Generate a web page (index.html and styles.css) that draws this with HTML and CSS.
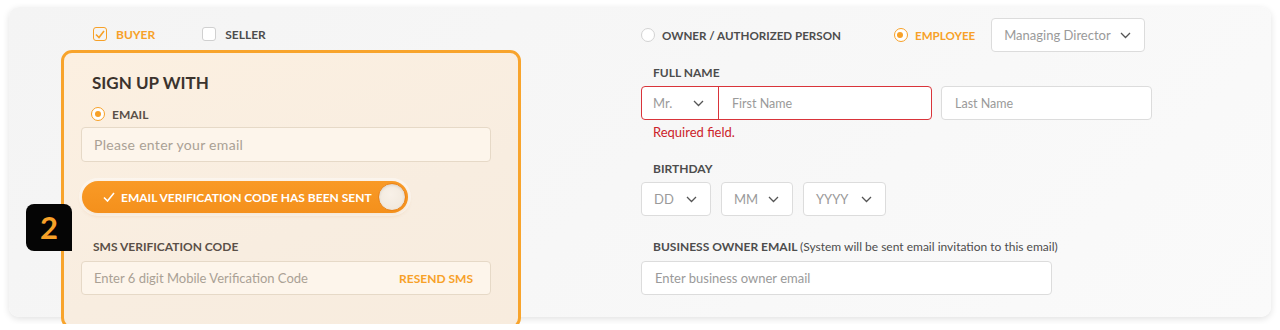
FILE: index.html
```html
<!DOCTYPE html>
<html lang="en">
<head>
<meta charset="UTF-8">
<meta name="viewport" content="width=device-width, initial-scale=1.0">
<title>Sign Up</title>
<link rel="stylesheet" href="styles.css">
</head>
<body>
<div class="card">
  <div class="left-col">
    <div class="roles">
      <label class="check checked">
        <span class="box"><svg width="10" height="9" viewBox="0 0 10 9"><polyline points="1,4.5 4,7.5 9,1" fill="none" stroke="#f7a128" stroke-width="1.6"/></svg></span>
        BUYER
      </label>
      <label class="check">
        <span class="box"></span>
        SELLER
      </label>
    </div>

    <div class="signup-panel">
      <div class="step-badge">2</div>
      <h2>SIGN UP WITH</h2>
      <label class="radio checked panel-radio"><span class="dot"></span>EMAIL</label>
      <div class="panel-input email">
        <span class="placeholder">Please enter your email</span>
      </div>
      <div class="sent-pill">
        <span class="pill-text">
          <svg width="12" height="10" viewBox="0 0 12 10"><polyline points="1,5.5 4.5,9 11,1" fill="none" stroke="#fff" stroke-width="1.6"/></svg>
          EMAIL VERIFICATION CODE HAS BEEN SENT
        </span>
        <span class="knob"></span>
      </div>
      <div class="panel-label">SMS VERIFICATION CODE</div>
      <div class="panel-input sms">
        <span class="placeholder">Enter 6 digit Mobile Verification Code</span>
        <span class="resend">RESEND SMS</span>
      </div>
    </div>
  </div>

  <div class="right-col">
    <div class="type-row">
      <label class="radio"><span class="dot"></span>OWNER / AUTHORIZED PERSON</label>
      <label class="radio checked employee"><span class="dot"></span>EMPLOYEE</label>
      <div class="select position">
        <span>Managing Director</span>
        <svg class="chev" width="11" height="7" viewBox="0 0 11 7"><polyline points="1,1 5.5,5.5 10,1" fill="none" stroke="#555" stroke-width="1.3"/></svg>
      </div>
    </div>

    <div class="field-label">FULL NAME</div>
    <div class="name-row">
      <div class="name-group error">
        <div class="title-select">
          <span>Mr.</span>
          <svg class="chev" width="11" height="7" viewBox="0 0 11 7"><polyline points="1,1 5.5,5.5 10,1" fill="none" stroke="#555" stroke-width="1.3"/></svg>
        </div>
        <div class="first-name">First Name</div>
      </div>
      <div class="input last-name">Last Name</div>
    </div>
    <div class="error-text">Required field.</div>

    <div class="field-label birthday">BIRTHDAY</div>
    <div class="date-row">
      <div class="select dd"><span>DD</span><svg class="chev" width="11" height="7" viewBox="0 0 11 7"><polyline points="1,1 5.5,5.5 10,1" fill="none" stroke="#555" stroke-width="1.3"/></svg></div>
      <div class="select mm"><span>MM</span><svg class="chev" width="11" height="7" viewBox="0 0 11 7"><polyline points="1,1 5.5,5.5 10,1" fill="none" stroke="#555" stroke-width="1.3"/></svg></div>
      <div class="select yyyy"><span>YYYY</span><svg class="chev" width="11" height="7" viewBox="0 0 11 7"><polyline points="1,1 5.5,5.5 10,1" fill="none" stroke="#555" stroke-width="1.3"/></svg></div>
    </div>

    <div class="field-label owner-email">BUSINESS OWNER EMAIL <span class="note">(System will be sent email invitation to this email)</span></div>
    <div class="input owner-input">Enter business owner email</div>
  </div>
</div>
</body>
</html>
```

FILE: styles.css
```css
body {
  margin: 0;
  padding: 0;
  background-color: #ffffff;
  font-family: Lato, "Noto Sans", sans-serif;
  color: #4a4a4a;
}

.card {
  display: flex;
  width: 1262px;
  height: 310px;
  margin: 7px 9px;
  padding: 11px 0 0 52px;
  box-sizing: border-box;
  background: linear-gradient(135deg, #f4f4f4, #fafafa);
  border-radius: 10px;
  box-shadow: 0 2px 7px rgba(0, 0, 0, 0.12);
}

.left-col {
  width: 460px;
}

.right-col {
  margin-left: 120px;
}

/* checkboxes and radios */
.roles {
  display: flex;
  align-items: center;
  height: 32px;
  padding-left: 32px;
  gap: 47px;
}

.check,
.radio {
  display: flex;
  align-items: center;
  font-size: 12px;
  font-weight: 700;
  color: #4d4d4d;
}

.check .box {
  width: 14px;
  height: 14px;
  margin-right: 9px;
  border: 1px solid #d0d0d0;
  border-radius: 3px;
  background: #fff;
  box-sizing: border-box;
  display: flex;
  align-items: center;
  justify-content: center;
}

.check.checked {
  color: #f7a128;
}

.check.checked .box {
  border: 1.5px solid #f7a128;
  background: transparent;
}

.radio .dot {
  width: 14px;
  height: 14px;
  margin-right: 7px;
  border: 1px solid #d3d3d3;
  border-radius: 50%;
  background: #fff;
  box-sizing: border-box;
  position: relative;
}

.radio.checked .dot {
  border: 1.5px solid #f7a128;
}

.radio.checked .dot::after {
  content: "";
  position: absolute;
  left: 2.5px;
  top: 2.5px;
  width: 6px;
  height: 6px;
  border-radius: 50%;
  background: #f7a128;
}

.radio.employee {
  color: #f7a128;
}

/* highlighted sign up panel */
.signup-panel {
  position: relative;
  height: 279px;
  padding: 19px 17px 0;
  box-sizing: border-box;
  border: 3px solid #f8a42c;
  border-radius: 11px;
  background: linear-gradient(160deg, #fcf0e1, #f8ede0 60%, #f8ecde);
}

.step-badge {
  position: absolute;
  left: -38px;
  top: 151px;
  width: 46px;
  height: 47px;
  background: #050505;
  border-radius: 8px 8px 0 8px;
  color: #f7a128;
  font-size: 31px;
  font-weight: 700;
  line-height: 47px;
  text-align: center;
}

.signup-panel h2 {
  margin: 0 0 0 11px;
  font-size: 17px;
  line-height: 22px;
  font-weight: 700;
  color: #3b332d;
}

.panel-radio {
  margin: 12px 0 0 10px;
  height: 16px;
  color: #5a5048;
}

.panel-input {
  display: flex;
  align-items: center;
  justify-content: space-between;
  width: 410px;
  height: 35px;
  margin-top: 5px;
  padding: 0 17px 0 12px;
  box-sizing: border-box;
  border: 1px solid #e6d9c7;
  border-radius: 4px;
  background: #fdf5eb;
  font-size: 13px;
}

.panel-input .placeholder {
  color: #aaa195;
}

.panel-input.email {
  font-size: 14px;
  letter-spacing: 0.3px;
}

.panel-input.sms {
  height: 34px;
  margin-top: 6px;
}

.resend {
  color: #f7a128;
  font-size: 12px;
  font-weight: 700;
}

.sent-pill {
  display: flex;
  align-items: center;
  justify-content: space-between;
  width: 326px;
  height: 32px;
  margin: 19px 0 0 1px;
  padding: 0 2px 0 21px;
  box-sizing: border-box;
  border-radius: 16px;
  background: linear-gradient(180deg, #f99a26, #f4901c);
  box-shadow: 0 0 0 3px rgba(255, 255, 255, 0.45), 0 2px 4px rgba(200, 110, 20, 0.25);
}

.pill-text {
  display: flex;
  align-items: center;
  gap: 6px;
  color: #fff;
  font-size: 12px;
  font-weight: 700;
}

.knob {
  width: 28px;
  height: 28px;
  border-radius: 50%;
  border: 1.5px solid #ea8317;
  box-sizing: border-box;
  background: radial-gradient(circle at 45% 40%, #f8f1e8, #efe6da);
  box-shadow: inset 0 1px 3px rgba(0, 0, 0, 0.12);
}

.panel-label {
  margin: 26px 0 0 12px;
  font-size: 12px;
  line-height: 16px;
  font-weight: 700;
  color: #5a5048;
}

/* right column */
.type-row {
  display: flex;
  align-items: center;
  height: 34px;
}

.type-row .radio {
  font-size: 11.6px;
}

.type-row .employee {
  margin-left: 53px;
}

.select,
.input {
  display: flex;
  align-items: center;
  height: 34px;
  box-sizing: border-box;
  border: 1px solid #dcdcdc;
  border-radius: 4px;
  background: #fff;
  font-size: 13px;
  color: #9a9a9a;
}

.select {
  justify-content: space-between;
  padding: 0 13px 0 12px;
}

.select.position {
  width: 154px;
  margin-left: 16px;
}

.field-label {
  margin-top: 13px;
  padding-left: 12px;
  font-size: 12px;
  line-height: 16px;
  font-weight: 700;
  color: #4d4d4d;
}

.field-label .note {
  font-weight: 400;
}

.name-row {
  display: flex;
  gap: 9px;
  margin-top: 5px;
}

.name-group {
  display: flex;
  width: 291px;
  height: 34px;
  box-sizing: border-box;
  border: 1px solid #d9343a;
  border-radius: 4px;
  background: #fff;
  font-size: 13px;
  color: #9a9a9a;
}

.title-select {
  display: flex;
  align-items: center;
  justify-content: space-between;
  width: 77px;
  padding: 0 14px 0 11px;
  box-sizing: border-box;
  border-right: 1px solid #d9343a;
}

.first-name {
  display: flex;
  align-items: center;
  padding-left: 13px;
  font-size: 12.5px;
}

.input {
  padding-left: 13px;
}

.last-name {
  width: 211px;
  font-size: 12.5px;
}

.error-text {
  margin-top: 4px;
  padding-left: 12px;
  font-size: 13px;
  line-height: 16px;
  color: #cc2229;
}

.field-label.birthday {
  margin-top: 21px;
}

.date-row {
  display: flex;
  gap: 10px;
  margin-top: 5px;
}

.select.dd { width: 70px; }
.select.mm { width: 72px; }
.select.yyyy { width: 83px; }

.field-label.owner-email {
  margin-top: 23px;
}

.owner-input {
  width: 411px;
  margin-top: 6px;
}
```
